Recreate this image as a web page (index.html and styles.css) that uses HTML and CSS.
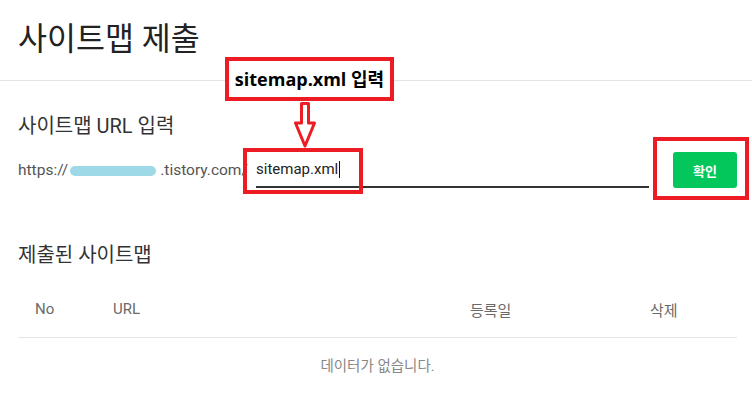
FILE: index.html
```html
<!DOCTYPE html>
<html lang="ko">
<head>
<meta charset="utf-8">
<title>사이트맵 제출</title>
<link rel="stylesheet" href="styles.css">
</head>
<body>
<div class="page">
  <header class="page-header">
    <h1 class="page-title">사이트맵 제출</h1>
  </header>

  <section class="section section-input">
    <h2 class="section-title">사이트맵 URL 입력</h2>
    <div class="url-row">
      <span class="url-prefix">https://<span class="blur"></span>.tistory.com/</span>
      <div class="url-field"><span class="url-value">sitemap.xml</span><span class="caret"></span></div>
      <button class="btn-confirm" type="button">확인</button>
    </div>
  </section>

  <section class="section section-list">
    <h2 class="section-title">제출된 사이트맵</h2>
    <div class="sitemap-table">
      <div class="table-head">
        <span class="col-no">No</span>
        <span class="col-url">URL</span>
        <span class="col-date">등록일</span>
        <span class="col-del">삭제</span>
      </div>
      <div class="table-empty">데이터가 없습니다.</div>
    </div>
  </section>

  <div class="annotations">
    <div class="anno-label">sitemap.xml 입력</div>
    <svg class="anno-arrow" width="24" height="48" viewBox="0 0 24 48" aria-hidden="true">
      <polygon points="7.5,2.5 14.5,2.5 14.5,22 20.5,22 11,45 1.5,22 7.5,22" fill="#fff" stroke="#ed1c24" stroke-width="3" stroke-linejoin="round"/>
    </svg>
    <div class="anno-box anno-input"></div>
    <div class="anno-box anno-button"></div>
  </div>
</div>
</body>
</html>
```

FILE: styles.css
```css
html, body {
  margin: 0;
  padding: 0;
  background: #fff;
}

body {
  font-family: Roboto, "Noto Sans CJK KR", "Noto Sans", sans-serif;
  color: #333;
}

.page {
  position: relative;
  width: 752px;
  height: 414px;
  overflow: hidden;
}

.page-header {
  height: 80px;
  border-bottom: 1px solid #e3e3e3;
  padding: 0 18px;
  display: flex;
  align-items: center;
}

.page-title {
  margin: 0;
  font-size: 31.5px;
  font-weight: 400;
  line-height: 1;
  color: #222;
}

.section {
  padding: 0 15px 0 18px;
}

.section-input {
  padding-top: 31px;
}

.section-list {
  padding-top: 53px;
}

.section-title {
  margin: 0;
  font-size: 20px;
  font-weight: 400;
  line-height: 28px;
  color: #333;
}

.url-row {
  display: flex;
  align-items: center;
  height: 36px;
  margin-top: 12px;
}

.url-prefix {
  flex: none;
  width: 238px;
  font-size: 15.5px;
  color: #555;
  white-space: nowrap;
}

.blur {
  display: inline-block;
  width: 86px;
  height: 10px;
  margin: 0 4px 0 2px;
  border-radius: 5px;
  background: #9ed9e8;
  vertical-align: -1px;
}

.url-field {
  flex: 1;
  height: 36px;
  box-sizing: border-box;
  border-bottom: 2px solid #333;
  display: flex;
  align-items: center;
  font-size: 15px;
  color: #222;
}

.caret {
  width: 1px;
  height: 17px;
  margin-left: 1px;
  background: #111;
}

.btn-confirm {
  width: 64px;
  height: 36px;
  margin-left: 24px;
  padding: 0;
  border: 0;
  border-radius: 3px;
  background: #03c75a;
  color: #fff;
  font: 700 13px "Noto Sans CJK KR", sans-serif;
}

.sitemap-table {
  margin-top: 12px;
}

.table-head {
  display: grid;
  grid-template-columns: 95px 1fr 180px 87px;
  align-items: center;
  height: 56px;
  border-bottom: 1px solid #e5e5e5;
  font-size: 15px;
  color: #6a6a6a;
}

.col-no {
  padding-left: 17px;
}

.table-empty {
  height: 52px;
  display: flex;
  align-items: center;
  justify-content: center;
  font-size: 14.5px;
  color: #888;
}

/* red screenshot annotations drawn over the page */
.anno-label {
  position: absolute;
  left: 225px;
  top: 57px;
  width: 169px;
  height: 44px;
  box-sizing: border-box;
  border: 4px solid #ed1c24;
  padding-bottom: 3px;
  background: #fff;
  display: flex;
  align-items: center;
  justify-content: center;
  font: 700 18px "Open Sans", "Noto Sans CJK KR", sans-serif;
  color: #000;
  white-space: nowrap;
}

.anno-arrow {
  position: absolute;
  left: 294px;
  top: 101px;
}

.anno-box {
  position: absolute;
  box-sizing: border-box;
  border: 4px solid #ed1c24;
}

.anno-input {
  left: 243px;
  top: 148px;
  width: 120px;
  height: 46px;
}

.anno-button {
  left: 653px;
  top: 137px;
  width: 96px;
  height: 63px;
}
```
